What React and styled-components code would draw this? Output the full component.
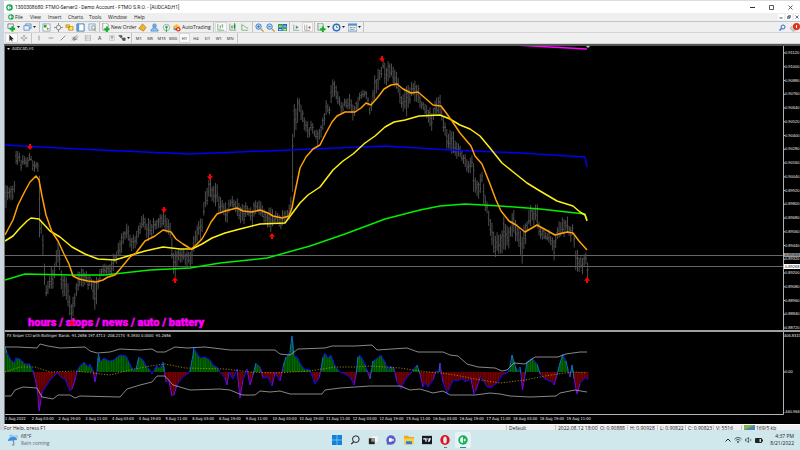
import React from 'react';
import styled, { createGlobalStyle, css } from 'styled-components';

const COLORS = {
  chrome: '#efefef',
  line: '#c4c4c4',
  text: '#222',
  taskbar: '#d0e7ec',
  bar: '#565656',
  axis: '#b4b4b4',
};

const UI_FONT = "'Open Sans', 'Liberation Sans', sans-serif";
const CHART_FONT = "'DejaVu Sans Condensed', 'Liberation Sans', sans-serif";

/* ---------- chart data ---------- */

const BAR_STEP = 1.676;
const FIRST_X = 6;
const LAST_X = 588;

// x, high, low
const RANGE = [
  [5, 188, 208], [9, 184, 202], [14, 180, 198], [15.5, 176, 196], [16, 149, 165], [19, 151, 164],
  [21, 160, 170], [24, 153, 165], [27, 159, 170], [30, 149, 159], [33, 160, 171], [38, 160, 171],
  [39.5, 161, 231], [41, 219, 235], [43, 235, 256], [45, 274, 297], [47, 283, 301], [51, 268, 291],
  [54, 268, 286], [57, 236, 270], [60, 251, 275], [62, 274, 295], [66, 278, 298], [69, 288, 310],
  [72, 305, 324], [75, 286, 310], [78, 270, 290], [82, 266, 285], [88, 272, 288], [92, 278, 293],
  [96, 280, 316], [98, 275, 290], [101, 265, 280], [105, 262, 275], [110, 262, 278], [114, 252, 270],
  [120, 238, 257], [124, 230, 245], [128, 222, 240], [131, 235, 250], [136, 232, 250], [139, 218, 240],
  [143, 214, 226], [148, 220, 240], [153, 218, 236], [158, 219, 230], [162, 210, 228], [165, 214, 233],
  [171, 224, 240], [173, 244, 276], [175, 252, 282], [178, 246, 265], [182, 248, 261], [187, 250, 268],
  [192, 248, 266], [194, 233, 250], [198, 220, 238], [202, 216, 240], [204, 197, 212], [210, 177, 200],
  [213, 188, 205], [216, 179, 206], [219, 195, 212], [223, 200, 213], [227, 204, 226], [231, 194, 210],
  [236, 198, 212], [242, 206, 228], [247, 202, 215], [252, 208, 230], [256, 193, 215], [261, 203, 218],
  [265, 211, 225], [270, 209, 236], [276, 212, 223], [282, 212, 231], [288, 206, 222], [291, 190, 216],
  [292.5, 108, 218], [294, 106, 140], [297, 102, 130], [299, 94, 115], [302, 105, 124], [305, 116, 133],
  [309, 125, 143], [311, 120, 132], [315, 128, 140], [319, 128, 146], [323, 115, 132], [326, 101, 118],
  [330, 104, 114], [332, 72, 99], [334, 74, 95], [337, 90, 103], [341, 101, 113], [345, 97, 110],
  [350, 95, 114], [354, 105, 123], [357, 96, 112], [361, 90, 100], [366, 87, 100], [370, 105, 120],
  [375, 75, 100], [380, 68, 84], [383, 60, 71], [386, 62, 90], [391, 63, 80], [395, 65, 86],
  [399, 80, 98], [402, 94, 113], [407, 88, 118], [411, 85, 102], [413, 79, 95], [417, 80, 105],
  [420, 95, 109], [425, 103, 116], [432, 108, 131], [437, 95, 115], [441, 97, 116], [443, 112, 137],
  [448, 130, 150], [453, 131, 158], [459, 145, 160], [464, 153, 165], [468, 157, 174], [472, 154, 170],
  [474, 168, 199], [478, 178, 201], [482, 168, 186], [484, 186, 207], [488, 204, 222], [492, 222, 247],
  [495, 225, 261], [500, 237, 257], [504, 218, 247], [508, 228, 252], [513, 209, 236], [518, 224, 242],
  [522, 228, 262], [526, 222, 242], [530, 205, 225], [537, 203, 226], [540, 224, 240], [545, 229, 241],
  [550, 230, 245], [554, 238, 263], [557, 225, 240], [562, 219, 240], [567, 214, 230], [570, 228, 242],
  [573, 222, 238], [576, 245, 272], [580, 254, 274], [584, 252, 272], [585.6, 250, 262], [587, 264, 280],
];

const FAST_MA = '5,235 13,220 18,205 25,191 30,182 36,176 39,180 42,196 46,215 52,232 58,241 64,254 69,264 73,276 79,279 88,281 96,282 103,280 108,277 115,275 121,268 130,257 136,253 145,241 155,236 163,230 171,232 176,239 183,244 191,249 195,246 202,239 206,232 211,222 217,214 225,211 237,208 243,211 252,212 260,210 268,213 273,216 282,218 289,216 292,208 295,192 300,168 306,157 313,149 320,145 326,133 332,122 337,116 345,112 355,112 361,108 366,103 371,105 378,97 384,89 391,85 397,84 403,89 411,93 418,92 425,98 433,105 441,106 447,114 452,121 460,133 471,146 475,156 482,164 490,184 496,200 501,211 509,221 516,225 525,232 537,225 546,230 555,235 567,232 573,233 579,241 587,250';
const SLOW_MA = '5,241 13,236 20,228 27,221 31,218 39,219 50,231 60,237 72,247 85,254 98,259 115,260 128,256 145,251 163,247 180,249 192,249 202,244 212,238 225,233 240,229 260,224 285,223 291,215 300,203 308,195 320,187 333,170 343,161 353,154 365,143 375,136 385,127 394,122 405,120 419,116 440,115 450,119 460,125 470,129 480,136 490,148 502,163 512,171 527,183 540,191 557,201 573,206 580,212 585,215 587,221';
const GREEN_MA = '5,280 25,274 70,275 105,275 150,270 190,268 220,263 267,258 310,246 345,234 385,219 420,210 440,206 465,204 500,206 540,209 585,214 587,220';
const BLUE_MA = '5,145 40,147 100,150 190,154 290,150 385,146 450,150 520,153 585,157 587,167';

const CCI = [
  [5, 347], [7, 353], [11, 360], [14, 363], [16, 358], [20, 359], [25, 364], [30, 364], [33, 371],
  [36, 382], [38, 395], [39, 411], [40, 406], [42, 392], [45, 388], [50, 380], [57, 373], [62, 378],
  [65, 379], [70, 391], [72, 389], [75, 380], [77, 371], [80, 366], [84, 362], [88, 367], [90, 364],
  [93, 370], [95, 382], [97, 371], [98.5, 354], [100, 362], [104, 358], [109, 361], [114, 360],
  [117, 357], [120, 355], [126, 356], [130, 364], [133, 370], [136, 369], [139, 357], [143, 360],
  [147, 367], [150, 370], [152, 374], [156, 366], [160, 368], [163, 362], [164.5, 371], [166, 382],
  [169, 381], [172, 396], [174, 395], [177, 385], [182, 378], [187, 374], [190, 372], [193, 355],
  [194, 347], [196, 352], [200, 358], [205, 357], [210, 360], [213, 365], [217, 367], [220, 372],
  [225, 378], [227, 385], [229, 372], [233, 379], [237, 369], [240, 398], [243, 380], [247, 369],
  [250, 385], [253, 375], [256, 363], [260, 367], [263, 378], [268, 377], [272, 386], [275, 373],
  [280, 381], [283, 367], [286, 357], [290, 352], [292, 336], [294, 356], [297, 357], [300, 363],
  [304, 369], [310, 370], [315, 384], [319, 378], [321, 369], [323, 357], [325, 353], [328, 358],
  [331, 355], [335, 366], [340, 372], [345, 374], [350, 377], [354, 385], [356, 375], [358, 357],
  [360, 355], [364, 362], [367, 370], [370, 379], [373, 361], [375, 360], [381, 355], [385, 362],
  [388, 370], [390, 366], [394, 368], [397, 382], [401, 389], [405, 380], [411, 373], [415, 367],
  [417, 365], [420, 374], [423, 387], [425, 383], [428, 387], [433, 380], [436, 371], [439, 372],
  [440, 363], [443, 382], [447, 393], [450, 387], [453, 380], [458, 381], [462, 378], [465, 382],
  [471, 379], [474, 394], [476, 390], [480, 377], [483, 380], [487, 387], [492, 387], [498, 382],
  [502, 375], [507, 373], [510, 367], [512, 355], [514, 362], [517, 372], [520, 367], [521, 374],
  [522.5, 390], [525, 375], [527, 362], [532, 358], [537, 364], [540, 374], [545, 379], [552, 382],
  [554, 385], [557, 375], [560, 363], [563, 354], [566, 361], [568, 370], [570, 377], [572, 365],
  [574, 378], [577, 394], [580, 384], [583, 380], [586, 377], [588, 380],
];

const UPPER_BAND = '5,347 17,347 37,348 40,344 48,346 60,348 85,347 90,351 97,353 110,352 120,349 140,350 152,349 157,352 165,352 175,347 187,348 205,347 230,350 275,350 280,354 290,355 298,349 325,348 332,346 355,346 372,345 377,350 407,348 418,352 443,352 450,355 458,356 467,364 478,367 495,368 502,371 507,370 514,363 525,364 535,357 558,357 566,354 580,352 587,352';
const LOWER_BAND = '5,396 11,396 15,390 23,387 37,388 42,397 53,399 58,395 70,395 75,398 80,396 120,397 127,389 140,385 152,382 157,376 165,376 173,385 190,390 220,389 230,390 242,395 255,395 260,391 270,392 280,391 290,394 322,394 325,390 340,388 370,386 400,386 410,390 420,389 433,393 443,391 450,395 475,395 490,393 500,394 510,396 530,397 556,396 560,393 575,390 587,392';
const MID_BAND = '5,372 20,367 35,367 50,372 75,371 110,375 130,370 150,366 165,364 185,368 225,369 250,372 275,373 310,371 335,367 355,367 370,366 385,367 400,368 420,371 440,373 455,375 475,379 500,383 525,380 545,376 565,373 575,372 587,373';

const SELL_MARKS = [[30, 147], [164, 210], [210, 177], [382, 59]];
const BUY_MARKS = [[72, 323], [175, 280], [272, 236], [587, 280]];

const PRICES = Array.from({ length: 21 }, (_, i) => (0.9112 - i * 0.0012).toFixed(5));

const DATES = [
  '1 Aug 2022', '2 Aug 03:00', '2 Aug 19:00', '3 Aug 11:00', '4 Aug 03:00', '4 Aug 19:00',
  '5 Aug 11:00', '8 Aug 03:00', '8 Aug 19:00', '9 Aug 11:00', '10 Aug 03:00', '10 Aug 19:00',
  '11 Aug 11:00', '12 Aug 03:00', '12 Aug 19:00', '15 Aug 11:00', '16 Aug 03:00', '16 Aug 19:00',
  '17 Aug 11:00', '18 Aug 03:00', '18 Aug 19:00', '19 Aug 11:00',
];

const interpolate = (rows, x, col) => {
  const next = rows.findIndex(row => row[0] >= x);
  if (next === -1) return rows[rows.length - 1][col];
  if (next === 0) return rows[0][col];
  const [a, b] = [rows[next - 1], rows[next]];
  return a[col] + ((b[col] - a[col]) * (x - a[0])) / (b[0] - a[0]);
};

const noise = n => {
  const v = Math.sin(n * 127.1) * 43758.5453;
  return v - Math.floor(v);
};

const barXs = [];
for (let x = FIRST_X; x < LAST_X; x += BAR_STEP) barXs.push(x);

const priceBarsPath = barXs
  .map((x, i) => {
    const high = interpolate(RANGE, x, 1);
    const low = interpolate(RANGE, x, 2);
    const span = low - high;
    const top = high + (noise(i) * 0.4 - 0.1) * span;
    const bottom = low - (noise(i + 900) * 0.4 - 0.1) * span;
    const open = top + (bottom - top) * (0.2 + noise(i + 50) * 0.6);
    const close = top + (bottom - top) * (0.2 + noise(i + 51) * 0.6);
    const f = n => n.toFixed(1);
    return `M${f(x)} ${f(top)}V${f(bottom)}M${f(x - 1)} ${f(open)}h1M${f(x)} ${f(close)}h1`;
  })
  .join('');

const ZERO_Y = 372;

const histogramPath = positive =>
  barXs
    .map(x => [x, interpolate(CCI, x, 1)])
    .filter(([, y]) => (positive ? y < ZERO_Y : y >= ZERO_Y))
    .map(([x, y]) => `M${x.toFixed(1)} ${ZERO_Y}V${y.toFixed(1)}`)
    .join('');

const cciColor = ([x1, y1], [x2, y2]) => {
  if (Math.abs(y2 - y1) / (x2 - x1) < 3) return '#0a0aff';
  return (y1 + y2) / 2 < ZERO_Y ? '#0a70d0' : '#6a0af0';
};

/* ---------- charts ---------- */

const Mark = ({ x, y, up }) => (
  <path
    transform={`translate(${x} ${y})${up ? ' rotate(180)' : ''}`}
    d="M-1 -3H1V-.8H3L0 3L-3 -.8H-1Z"
    fill="#f00"
  />
);

const PriceChart = () => (
  <Plot viewBox="5 46 795 284" role="img" aria-label="AUDCAD hourly price chart">
    <path d="M7 48h3l-1.5 2z" fill="#ddd" />
    <ChartText x="12" y="50">AUDCAD,H1</ChartText>
    <path d="M5 255.5H783M5 266.5H783" stroke="#666" strokeWidth="1" />
    <path d={priceBarsPath} stroke={COLORS.bar} strokeWidth="0.9" fill="none" />
    <Curve points={BLUE_MA} stroke="#0000f5" />
    <Curve points={GREEN_MA} stroke="#00f000" />
    <Curve points={SLOW_MA} stroke="#fff014" />
    <Curve points={FAST_MA} stroke="#ffa008" />
    <Curve points="514,45 550,47 587,49" stroke="#f0f" />
    <path d="M586 46h4l-2 2z" fill="#ccc" />
    <Note x="28" y="326">hours / stops / news / auto / battery</Note>
    {SELL_MARKS.map(([x, y]) => <Mark key={x} x={x} y={y} />)}
    {BUY_MARKS.map(([x, y]) => <Mark key={x} x={x} y={y} up />)}
    <path d="M783.5 46V330" stroke={COLORS.axis} />
    {PRICES.map((price, i) => {
      const y = 53 + i * 13.75;
      return (
        <g key={price}>
          <path d={`M784 ${y.toFixed(1)}h1`} stroke={COLORS.axis} />
          <AxisText x="785" y={(y + 1).toFixed(1)}>{price}</AxisText>
        </g>
      );
    })}
    <rect x="784" y="253" width="16" height="4" fill="#999" />
    <AxisText x="785" y="256" $dark>0.89368</AxisText>
    <rect x="784" y="264" width="16" height="5" fill="#fff" />
    <AxisText x="785" y="268" $dark>0.89268</AxisText>
  </Plot>
);

const CciChart = () => (
  <Plot viewBox="5 332 795 83" role="img" aria-label="CCI with Bollinger Bands">
    <path d={histogramPath(true)} stroke="#006a00" strokeWidth="1.4" />
    <path d={histogramPath(false)} stroke="#780000" strokeWidth="1.4" />
    {CCI.slice(1).map((point, i) => (
      <line
        key={point[0]}
        x1={CCI[i][0]}
        y1={CCI[i][1]}
        x2={point[0]}
        y2={point[1]}
        stroke={cciColor(CCI[i], point)}
      />
    ))}
    <polyline points={UPPER_BAND} stroke="#aaa" strokeWidth="0.8" fill="none" />
    <polyline points={LOWER_BAND} stroke="#aaa" strokeWidth="0.8" fill="none" />
    <polyline points={MID_BAND} stroke="#b4a000" strokeWidth="0.8" strokeDasharray="1.2 1.6" fill="none" />
    <ChartText x="7" y="337">
      FX Sniper CCI with Bollinger Bands -91.2656 197.4713 -208.2174 -5.3930 0.0000 -91.2656
    </ChartText>
    <path d="M783.5 332V414.5H5" stroke={COLORS.axis} fill="none" />
    <path d="M784 372h1" stroke={COLORS.axis} />
    <AxisText x="784" y="337">406.8315</AxisText>
    <AxisText x="785" y="373">0.00</AxisText>
    <AxisText x="784" y="413">-440.966</AxisText>
  </Plot>
);

/* ---------- toolbar icons, on a 10 x 10 grid ---------- */

const GLYPHS = {
  newChart: <><path d="M1 1h6v5H1z" fill="#eef" stroke="#567" strokeWidth=".8" /><path d="M6 3.5v6M3 6.5h6" stroke="#13b02c" strokeWidth="2.4" /></>,
  profiles: <><path d="M3 1h6v5H3z" fill="#cfe3f8" stroke="#4a7fb5" strokeWidth=".8" /><path d="M1 3h6v5H1z" fill="#e6f1fc" stroke="#4a7fb5" strokeWidth=".8" /></>,
  market: <><path d="M1 1h8v8H1z" fill="#fdfdf0" stroke="#6a9ac8" strokeWidth=".8" /><path d="M2 2h3v3H2z" fill="#1fa83a" /><path d="M5 5l3 1-2 2z" fill="#e06a20" /></>,
  target: <><circle cx="5" cy="5" r="2.5" fill="none" stroke="#888" /><path d="M5 0v3M5 7v3M0 5h3M7 5h3" stroke="#888" /></>,
  navigator: <><path d="M1 2h4v3H1zM4 4h5v4H4z" fill="#f5c531" stroke="#b98a10" strokeWidth=".7" /><circle cx="7" cy="6" r="1.2" fill="#fff2a0" /></>,
  terminal: <><path d="M1 1h8v8H1z" fill="#fff" stroke="#3b78b4" /><path d="M1 1h2.5v8H1z" fill="#5b98d4" /></>,
  tester: <><path d="M1 1h7v7H1z" fill="#dce9f6" stroke="#7aa0c6" strokeWidth=".8" /><circle cx="6" cy="5" r="2" fill="#fff4c0" stroke="#5a8ac0" strokeWidth=".8" /><path d="M7 7l2 2.5" stroke="#c89018" /></>,
  order: <><path d="M2 0h4l2 2v6H2z" fill="#fff" stroke="#788" strokeWidth=".8" /><path d="M6.5 4v6M3.5 7h6" stroke="#13b02c" strokeWidth="2.3" /></>,
  gold: <path d="M5 1l4 4-3 4-5-3z" fill="#eeb42c" stroke="#b07a10" strokeWidth=".8" />,
  community: <><circle cx="5" cy="3" r="2" fill="#6ab0ee" stroke="#3a78c0" strokeWidth=".7" /><path d="M1 9c0-5 8-5 8 0z" fill="#8cc4f6" stroke="#3a78c0" strokeWidth=".7" /></>,
  signal: <><circle cx="5" cy="5" r="3.6" fill="none" stroke="#8ab6b0" /><circle cx="5" cy="4.5" r="1.4" fill="#2aa848" /><path d="M5 5v5" stroke="#2aa848" /></>,
  auto: <><path d="M1 4l4-3 4 3-3 3H2z" fill="#f2c230" /><path d="M1 6h5v2H3z" fill="#3d83cc" /><circle cx="7" cy="7" r="2.5" fill="#e02818" /><path d="M6 6h2v2H6z" fill="#fff" /></>,
  bars: <path d="M1 1v8h8M4 3v5M4 4h1.5M7 2v4M7 2h-1" fill="none" stroke="#3c8c46" strokeWidth=".8" />,
  candles: <><path d="M1 1v8h8" fill="none" stroke="#777" strokeWidth=".8" /><path d="M3 3h1.5v4H3zM6 2h2v5H6z" fill="#1aa834" /><path d="M7 0v8" stroke="#187a2a" strokeWidth=".8" /></>,
  lines: <path d="M1 1v8h8M1 4c3-3 4 3 8 2" fill="none" stroke="#4a9450" strokeWidth=".8" />,
  zoomIn: <><circle cx="4" cy="4" r="3" fill="#b8dcfa" stroke="#2f7cc8" /><path d="M2.5 4h3M4 2.5v3" stroke="#1f5ca0" strokeWidth=".8" /><path d="M6.5 6.5l3 3" stroke="#c99520" strokeWidth="1.4" /></>,
  zoomOut: <><circle cx="4" cy="4" r="3" fill="#b8dcfa" stroke="#2f7cc8" /><path d="M2.5 4h3" stroke="#1f5ca0" strokeWidth=".8" /><path d="M6.5 6.5l3 3" stroke="#c99520" strokeWidth="1.4" /></>,
  tile: <><path d="M0 1h5v4H0zM5 5h5v4H5z" fill="#2aa83a" /><path d="M5 1h5v4H5zM0 5h5v4H0z" fill="#2368c0" /><path d="M1 3h3v1H1zM6 3h3v1H6zM1 7h3v1H1zM6 7h3v1H6z" fill="#fff" /></>,
  scroll: <><path d="M1 1v8h8" fill="none" stroke="#777" strokeWidth=".8" /><path d="M4 2l4 2.5L4 7z" fill="#2fa348" /></>,
  shift: <><path d="M1 1v8h8M4 1v7" fill="none" stroke="#777" strokeWidth=".8" /><path d="M9 3v4L5.5 5z" fill="#b05040" /></>,
  indicators: <><path d="M1 0h5l1 2v6H1z" fill="#dfe9df" stroke="#688068" strokeWidth=".8" /><path d="M6.5 4v6M3.5 7h6" stroke="#13b02c" strokeWidth="2.3" /></>,
  clock: <><circle cx="5" cy="5" r="4.2" fill="#2f78cc" stroke="#1c58a0" strokeWidth=".6" /><circle cx="5" cy="5" r="2.8" fill="#e6f2fd" /><path d="M5 3v2h1.5" fill="none" stroke="#244" strokeWidth=".7" /></>,
  template: <><path d="M0 1h10v8H0z" fill="#e0eefb" stroke="#4383c4" strokeWidth=".8" /><path d="M0 1h10v2H0z" fill="#4f93d6" /><path d="M2 5h3M2 7h5M6 5h2" stroke="#c07040" strokeWidth=".8" /></>,
  cursor: <path d="M3 1v8l2-2 1 2.5 1-.5-1-2.5h2.5z" fill="#222" />,
  cross: <path d="M5 1v3M5 6v3M1 5h3M6 5h3" stroke="#666" />,
  vline: <path d="M5 1v8" stroke="#666" />,
  hline: <path d="M1 5h8" stroke="#666" />,
  trend: <path d="M2 8l6-6" stroke="#666" strokeWidth=".9" />,
  channel: <path d="M1 8l7-7M3 9l6-6M1 5h6M3 7h5M4 3v5" stroke="#666" strokeWidth=".7" />,
  fib: <path d="M1 2h8M1 4h8M1 6h8M1 8h8M2 2v6M8 2v6" stroke="#8a8a8a" strokeWidth=".7" strokeDasharray="1 .6" />,
  label: <><path d="M1 1h8v8H1z" fill="none" stroke="#888" strokeWidth=".8" strokeDasharray="1 .6" /><path d="M3 3h4M5 3v4" stroke="#555" /></>,
  arrows: <path d="M1 2h4v2H3zM5 5h4v3H6zM2 3l6 5" fill="#555" stroke="#555" strokeWidth=".8" />,
};

const Glyph = ({ name, size = 9 }) => (
  <svg width={size} height={size} viewBox="0 0 10 10" fill="none" aria-hidden="true">
    {GLYPHS[name]}
  </svg>
);

const Caret = () => (
  <svg width="3" height="2" viewBox="0 0 3 2" aria-hidden="true">
    <path d="M0 0h3L1.5 2z" fill="#222" />
  </svg>
);

const Tool = ({ name, pressed, menu, size }) => (
  <ToolButton type="button" aria-label={name} $pressed={pressed}>
    <Glyph name={name} size={size} />
    {menu && <Caret />}
  </ToolButton>
);

const FtmoLogo = ({ size }) => (
  <svg width={size} height={size} viewBox="0 0 12 12" aria-hidden="true">
    <circle cx="6" cy="6" r="5.6" fill="#10a850" />
    <path d="M6 2.5a3.5 3.5 0 0 0 0 7zM6.8 4.5h2v3h-2z" fill="#fff" />
  </svg>
);

/* ---------- window parts ---------- */

const MENUS = [['File', 15], ['View', 18], ['Insert', 20], ['Charts', 21], ['Tools', 19], ['Window', 26], ['Help', 16]];
const TIMEFRAMES = ['M1', 'M5', 'M15', 'M30', 'H1', 'H4', 'D1', 'W1', 'MN'];

const TitleBar = () => (
  <TitleRow>
    <FtmoLogo size={7} />
    <Title>1300308680: FTMO-Server2 - Demo Account - FTMO S.R.O. - [AUDCAD,H1]</Title>
    <CaptionButton type="button" aria-label="Minimize">
      <svg width="5" height="5" viewBox="0 0 5 5"><path d="M0 2.5h5" stroke="#333" /></svg>
    </CaptionButton>
    <CaptionButton type="button" aria-label="Maximize">
      <svg width="5" height="5" viewBox="0 0 5 5"><path d="M.5 .5h4v4h-4z" fill="none" stroke="#333" strokeWidth=".8" /></svg>
    </CaptionButton>
    <CaptionButton type="button" aria-label="Close">
      <svg width="5" height="5" viewBox="0 0 5 5"><path d="M.5 .5l4 4m0-4l-4 4" stroke="#333" strokeWidth=".8" /></svg>
    </CaptionButton>
  </TitleRow>
);

const MenuBar = () => (
  <MenuRow>
    <FtmoLogo size={6} />
    <MenuList>
      {MENUS.map(([label, width]) => (
        <MenuButton type="button" key={label} $width={width}>{label}</MenuButton>
      ))}
    </MenuList>
    <ChildButton type="button" aria-label="Minimize chart">
      <svg width="4" height="4" viewBox="0 0 4 4"><path d="M.5 3h3" stroke="#357" /></svg>
    </ChildButton>
    <ChildButton type="button" aria-label="Restore chart">
      <svg width="4" height="4" viewBox="0 0 4 4"><path d="M1.5 .5h2v2h-2zM.5 1.5h2v2h-2z" fill="#fff" stroke="#357" strokeWidth=".7" /></svg>
    </ChildButton>
    <ChildButton type="button" aria-label="Close chart">
      <svg width="4" height="4" viewBox="0 0 4 4"><path d="M.5 .5l3 3m0-3l-3 3" stroke="#357" strokeWidth=".8" /></svg>
    </ChildButton>
  </MenuRow>
);

const MainToolbar = () => (
  <ToolRow>
    <Group $width={36}>
      <Tool name="newChart" menu />
      <Tool name="profiles" menu />
    </Group>
    <Group $width={60}>
      <Tool name="market" />
      <Tool name="target" />
      <Tool name="navigator" />
      <Tool name="terminal" />
      <Tool name="tester" />
    </Group>
    <Group $width={114}>
      <TextTool type="button" $width={36}><Glyph name="order" />New Order</TextTool>
      <Tool name="gold" />
      <Tool name="community" />
      <Tool name="signal" />
      <TextTool type="button" $width={40}><Glyph name="auto" />AutoTrading</TextTool>
    </Group>
    <Group $width={39}>
      <Tool name="bars" size={8} pressed />
      <Tool name="candles" size={8} />
      <Tool name="lines" size={8} />
    </Group>
    <Group $width={37}>
      <Tool name="zoomIn" />
      <Tool name="zoomOut" />
      <Tool name="tile" />
    </Group>
    <Group $width={25}>
      <Tool name="scroll" size={7} />
      <Tool name="shift" size={7} pressed />
    </Group>
    <Group $width={49}>
      <Tool name="indicators" menu />
      <Tool name="clock" menu />
      <Tool name="template" menu />
    </Group>
    <ToolEnd>
      <BareButton type="button" aria-label="Search">
        <svg width="7" height="7" viewBox="0 0 7 7" fill="none"><circle cx="4" cy="3" r="2" stroke="#3468d0" /><path d="M2.5 4.5L.5 6.5" stroke="#3468d0" strokeWidth="1.3" /></svg>
      </BareButton>
      <BareButton type="button" aria-label="Notifications">
        <svg width="10" height="9" viewBox="0 0 10 9"><path d="M0 5l4-3 4 4-5 2.5z" fill="#ccc" stroke="#999" strokeWidth=".5" /><circle cx="6.5" cy="3.5" r="3.5" fill="#e03018" /><path d="M6.5 2v3" stroke="#fff" /></svg>
      </BareButton>
    </ToolEnd>
  </ToolRow>
);

const DrawingToolbar = () => (
  <ToolRow>
    <Group $width={28}>
      <Tool name="cursor" size={8} pressed />
      <Tool name="cross" size={8} />
    </Group>
    <Group $width={100}>
      <Tool name="vline" size={6} />
      <Tool name="hline" size={6} />
      <Tool name="trend" size={8} />
      <Tool name="channel" size={8} />
      <Tool name="fib" size={8} />
      <ToolButton type="button">A</ToolButton>
      <Tool name="label" size={6} />
      <Tool name="arrows" size={8} menu />
    </Group>
    <Group $width={106}>
      {TIMEFRAMES.map(label => (
        <ToolButton type="button" key={label} $pressed={label === 'H1'} $small>{label}</ToolButton>
      ))}
    </Group>
  </ToolRow>
);

const StatusBar = () => (
  <StatusRow>
    <StatusCell $grow>For Help, press F1</StatusCell>
    <StatusCell $width={49}>Default</StatusCell>
    <StatusCell $width={42}>2022.08.12 18:00</StatusCell>
    <StatusCell $width={30}>O: 0.90888</StatusCell>
    <StatusCell $width={30}>H: 0.90928</StatusCell>
    <StatusCell $width={28}>L: 0.90822</StatusCell>
    <StatusCell $width={28}>C: 0.90823</StatusCell>
    <StatusCell $width={28}>V: 5516</StatusCell>
    <StatusCell $width={59}>
      <svg width="11" height="6" viewBox="0 0 11 6" aria-hidden="true"><path d="M0 0h11v6H0z" fill="#4a86b8" /><path d="M0 0h11L0 5z" fill="#8cb24a" /></svg>
      169/5 kb
    </StatusCell>
  </StatusRow>
);

/* ---------- taskbar ---------- */

const APPS = [
  ['Start', <path d="M0 0h5.7v5.7H0zM6.3 0H12v5.7H6.3zM0 6.3h5.7V12H0zM6.3 6.3H12V12H6.3z" fill="#0f84dc" />],
  ['Search', <><circle cx="7" cy="5" r="4" fill="none" stroke="#222" strokeWidth="1.2" /><path d="M4.5 8L1.5 11" stroke="#222" strokeWidth="1.4" /></>],
  ['Task view', <><path d="M4 1h8v8H4z" fill="#f6f6f6" stroke="#ccc" strokeWidth=".4" /><path d="M1 4h7v7H1z" fill="#222" /><path d="M4 4h4v4H4z" fill="#999" /></>],
  ['Chat', <><circle cx="6" cy="6" r="5.6" fill="#5b5bc8" /><path d="M1 7v4.5h4z" fill="#5b5bc8" /><path d="M3.5 4h3.5v4H3.5zM7.2 5.5L9 4.3v3.4L7.2 6.5z" fill="#fff" /></>],
  ['File Explorer', <><path d="M0 1h5l1 1.5h6v8.500H0z" fill="#e8a920" /><path d="M0 4h12v7H0z" fill="#fbce48" /><path d="M2.5 7.5h7V11h-7z" fill="#2580d0" /></>],
  ['TradingView', <><path d="M0 1h12v10H0z" fill="#151922" /><path d="M1.500 4h4v4H4V5.500H1.500zM8.500 4h2.300L9 8H7z" fill="#fff" /><circle cx="7" cy="4.700" r=".8" fill="#fff" /></>],
  ['Opera', <><ellipse cx="6" cy="6" rx="5.600" ry="5.900" fill="#e01020" /><ellipse cx="6" cy="6" rx="2.200" ry="4.200" fill="#dcebef" /></>],
  ['FTMO', <><circle cx="6" cy="6" r="5.700" fill="#18b058" /><path d="M6 2.500a3.500 3.500 0 0 0 0 7zM7 4.500h2v3H7z" fill="#e8f8ee" /></>],
];

const Taskbar = () => (
  <TaskbarRow>
    <Weather href="#weather">
      <svg width="10" height="12" viewBox="0 0 10 12" aria-hidden="true">
        <path d="M1 2h7M3 0v3M9 1v3" stroke="#8ac0ee" strokeWidth="1.2" />
        <path d="M0 7c0-5 9-6 9-1z" fill="#3b8ee4" />
        <path d="M5 6l1 4c0 2-2 1.5-2 .5" fill="none" stroke="#567" strokeWidth=".8" />
      </svg>
      <span><strong>68°F</strong><small>Rain coming</small></span>
    </Weather>
    <AppList>
      {APPS.map(([name, art]) => (
        <AppButton type="button" key={name} aria-label={name} $active={name === 'FTMO'} $running={name === 'Opera'}>
          <svg width="10" height="10" viewBox="0 0 12 12" aria-hidden="true">{art}</svg>
        </AppButton>
      ))}
    </AppList>
    <Tray>
      <svg width="6" height="4" viewBox="0 0 6 4" fill="none"><path d="M.5 3.5L3 1l2.5 2.5" stroke="#222" /></svg>
      <svg width="8" height="6" viewBox="0 0 8 6" fill="none"><path d="M.5 2.2c2-2.2 5-2.2 7 0M1.700 3.600c1.500-1.500 3-1.500 4.600 0" stroke="#345" strokeWidth=".9" /><circle cx="4" cy="5" r=".9" fill="#345" /></svg>
      <svg width="7" height="6" viewBox="0 0 7 6" fill="none"><path d="M.5 2h1.200L3.500 .5v5L1.700 4H.5zM5 1.500c1 1 1 2 0 3" stroke="#345" strokeWidth=".7" /></svg>
      <svg width="8" height="5" viewBox="0 0 8 5"><path d="M.5 .5h6v4h-6z" fill="none" stroke="#222" /><path d="M1 1h3.500v3H1zM7 1.500h1v2H7z" fill="#222" /></svg>
      <Clock>4:37 PM<br />8/21/2022</Clock>
    </Tray>
  </TaskbarRow>
);

const App = () => (
  <Desktop>
    <GlobalStyle />
    <Terminal>
      <TitleBar />
      <MenuBar />
      <MainToolbar />
      <DrawingToolbar />
      <ChartWindow>
        <PriceChart />
        <Splitter />
        <CciChart />
        <DateAxis>
          {DATES.map(date => <DateLabel key={date}>{date}</DateLabel>)}
        </DateAxis>
      </ChartWindow>
      <StatusBar />
    </Terminal>
    <Taskbar />
  </Desktop>
);

/* ---------- styles ---------- */

const GlobalStyle = createGlobalStyle`
  * {
    box-sizing: border-box;
  }

  body {
    margin: 0;
    background: ${COLORS.taskbar};
  }

  svg {
    display: block;
    flex: none;
  }

  button {
    appearance: none;
    margin: 0;
    padding: 0;
    border: 0;
    background: none;
    color: inherit;
    font: inherit;
  }
`;

const Desktop = styled.div`
  display: flex;
  flex-direction: column;
  min-height: 100vh;
  overflow: hidden;
  background: #ccd6df;
  color: ${COLORS.text};
  font: 5px/7px ${UI_FONT};
`;

const Terminal = styled.main`
  margin-left: 4px;
  background: ${COLORS.chrome};
`;

const TitleRow = styled.header`
  display: flex;
  align-items: center;
  height: 13px;
  padding-left: 2px;
  border-top: 1px solid #ddd;
  background: #fff;
`;

const Title = styled.h1`
  flex: 1;
  margin: 0 0 0 2px;
  font: 400 5px/7px Roboto, ${UI_FONT};
`;

const CaptionButton = styled.button`
  display: flex;
  justify-content: center;
  width: 19px;
`;

const MenuRow = styled.nav`
  display: flex;
  align-items: center;
  height: 9px;
  padding-left: 4px;
  border-bottom: 1px solid ${COLORS.line};
`;

const MenuList = styled.div`
  display: flex;
  flex: 1;
  margin-left: 1px;
`;

const MenuButton = styled.button`
  width: ${p => p.$width}px;
  text-align: left;
`;

const ChildButton = styled.button`
  display: flex;
  align-items: center;
  justify-content: center;
  width: 6px;
  height: 6px;
  margin-left: 2px;
  background: #fff;
`;

const ToolRow = styled.div`
  display: flex;
  align-items: stretch;
  height: 11px;
  border-bottom: 1px solid #d4d4d4;
`;

const Group = styled.div`
  display: flex;
  width: ${p => p.$width}px;
  padding: 0 1px;
  border-right: 1px solid ${COLORS.line};
`;

const ToolButton = styled.button`
  display: flex;
  flex: 1 1 0;
  align-items: center;
  justify-content: center;
  gap: 1px;
  min-width: 0;
  color: #555;
  font-weight: 600;

  ${p => p.$small && css`
    font-size: 4px;
  `}

  ${p => p.$pressed && css`
    background: #fafafa;
    box-shadow: inset 0 0 0 1px #dadada;
  `}
`;

const TextTool = styled.button`
  display: flex;
  flex: none;
  align-items: center;
  gap: 1px;
  width: ${p => p.$width}px;
  white-space: nowrap;
`;

const ToolEnd = styled.div`
  display: flex;
  align-items: center;
  gap: 4px;
  margin-left: auto;
`;

const BareButton = styled.button`
  display: block;
`;

const ChartWindow = styled.section`
  border-top: 2px solid #555;
  border-left: 1px solid #777;
  background: #000;
`;

const Plot = styled.svg`
  display: block;
  width: 100%;
  height: auto;
  overflow: hidden;
`;

const Splitter = styled.div`
  height: 2px;
  background: #a0a0a0;
`;

const Curve = styled.polyline`
  fill: none;
  stroke-width: 1.5;
  stroke-linejoin: round;
`;

const ChartText = styled.text`
  fill: #e4e4e4;
  font: 4px ${CHART_FONT};
`;

const AxisText = styled.text`
  fill: ${p => (p.$dark ? '#111' : '#eee')};
  font: 4px 'Liberation Sans', sans-serif;
`;

const Note = styled.text`
  fill: #f0f;
  stroke: #f0f;
  stroke-width: 0.4;
  font: 900 11px Roboto, 'Liberation Sans', sans-serif;
`;

const DateAxis = styled.div`
  display: grid;
  grid-template-columns: repeat(22, 1fr);
  height: 9px;
  padding-right: 26%;
  color: #eee;
  font: 4px/7px ${CHART_FONT};
`;

const DateLabel = styled.span`
  white-space: nowrap;
`;

const StatusRow = styled.footer`
  display: flex;
  height: 6px;
  overflow: hidden;
  border-top: 1px solid #fff;
`;

const StatusCell = styled.span`
  display: flex;
  flex: ${p => (p.$grow ? '1' : 'none')};
  gap: 1px;
  width: ${p => (p.$width ? `${p.$width}px` : 'auto')};
  padding-left: ${p => (p.$grow ? 0 : 2)}px;
  border-left: ${p => (p.$grow ? 0 : 1)}px solid ${COLORS.line};
  white-space: nowrap;
`;

const TaskbarRow = styled.footer`
  display: grid;
  flex: 1;
  grid-template-columns: 1fr auto 1fr;
  align-items: center;
  min-height: 20px;
  background: ${COLORS.taskbar};
`;

const Weather = styled.a`
  display: flex;
  align-items: center;
  gap: 3px;
  padding-left: 8px;
  color: #333;
  text-decoration: none;

  strong,
  small {
    display: block;
    font-size: 5px;
    font-weight: 400;
  }

  small {
    color: #667;
  }
`;

const AppList = styled.div`
  display: flex;
  gap: 2px;
`;

const AppButton = styled.button`
  display: flex;
  align-items: center;
  justify-content: center;
  width: 16px;
  height: 16px;
  border-radius: 2px;
  background: ${p => (p.$active ? '#e6f3f6' : 'none')};

  ${p => p.$active && css`
    background: linear-gradient(#2a8a98, #2a8a98) center bottom / 6px 1px no-repeat #e6f3f6;
  `}

  ${p => p.$running && css`
    background: linear-gradient(#777, #777) center bottom / 3px 1px no-repeat;
  `}
`;

const Tray = styled.div`
  display: flex;
  align-items: center;
  justify-content: flex-end;
  gap: 3px;
  padding-right: 6px;
`;

const Clock = styled.time`
  margin-left: 4px;
  text-align: right;
`;

export default App;
